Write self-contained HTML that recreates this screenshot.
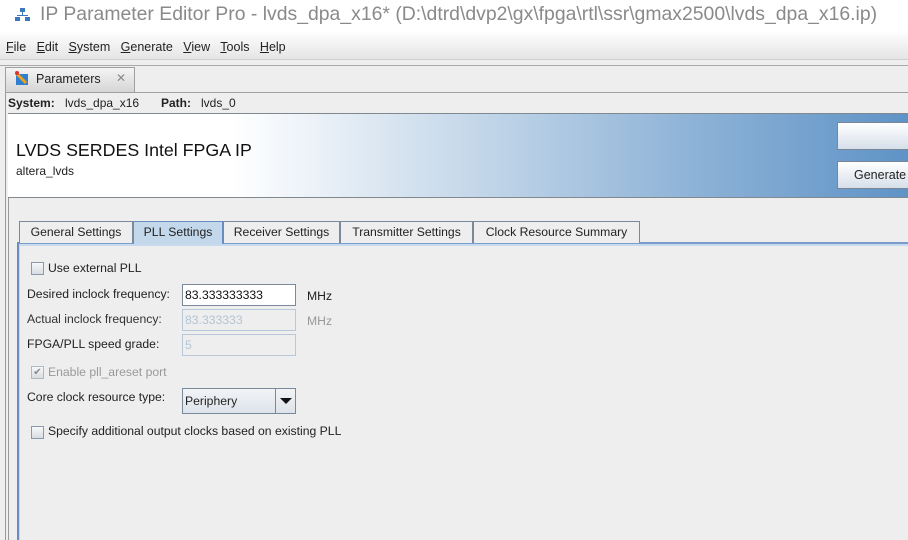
<!DOCTYPE html>
<html><head><style>
*{margin:0;padding:0;box-sizing:border-box}
body{width:908px;height:540px;overflow:hidden;background:#eeeeee;font-family:"Liberation Sans",Arial,sans-serif;font-size:12px;color:#222;position:relative}
.a{position:absolute;white-space:nowrap}
.tab{position:absolute;top:221px;height:22px;border:1px solid #7a8a9a;border-bottom:none;background:#eeeeee;font-size:12.2px;padding-top:3px;text-align:center;color:#222}
.cb{position:absolute;width:13px;height:13px;border:1px solid #8a9aaa;background:linear-gradient(#f6f8fa,#d8dde3)}
.lbl{position:absolute;font-size:12.2px;white-space:nowrap}
.fld{position:absolute;width:114px;height:22px;border:1px solid #b8c8d8;background:#eeeeee;font-size:12.2px;padding:3px 2px;color:#b4c4d4}
</style></head><body>
<div class="a" style="left:0;top:0;width:908px;height:30px;background:#fff"></div>
<svg class="a" style="left:15px;top:7px" width="16" height="16" viewBox="0 0 16 16"><rect x="5" y="1" width="5" height="4" fill="#3a78c0"/><rect x="7" y="5" width="1" height="4" fill="#3a78c0"/><rect x="2" y="8" width="11" height="1" fill="#3a78c0"/><rect x="0" y="10" width="5" height="4" fill="#3a78c0"/><rect x="10" y="10" width="5" height="4" fill="#3a78c0"/></svg>
<div class="a" style="left:40px;top:3px;font-size:19.4px;color:#8a8a8a">IP Parameter Editor Pro - lvds_dpa_x16* (D:\dtrd\dvp2\gx\fpga\rtl\ssr\gmax2500\lvds_dpa_x16.ip)</div>
<div class="a" style="left:0;top:30px;width:908px;height:30px;background:linear-gradient(#ffffff,#e4e4e4)"></div>
<div class="a" style="left:0;top:59px;width:908px;height:1px;background:#d0d0d0"></div>
<div class="a" style="left:0;top:60px;width:908px;height:6px;background:#eeeeee"></div>
<div class="a" style="left:0;top:65px;width:908px;height:1px;background:#a8a8a8"></div>
<div class="a" style="left:6px;top:40px;font-size:12.5px"><u>F</u>ile&nbsp;&nbsp; <u>E</u>dit&nbsp;&nbsp; <u>S</u>ystem&nbsp;&nbsp; <u>G</u>enerate&nbsp;&nbsp; <u>V</u>iew&nbsp;&nbsp; <u>T</u>ools&nbsp;&nbsp; <u>H</u>elp</div>
<div class="a" style="left:5px;top:67px;width:130px;height:26px;border:1px solid #a0a0a0;border-bottom:none;background:linear-gradient(#f4f4f4,#d4d4d4)"></div>
<svg class="a" style="left:14px;top:71px" width="16" height="16"><rect x="2" y="3" width="12" height="11" fill="#2f7fd0"/><path d="M2 2 L12 12" stroke="#f0a020" stroke-width="3"/><circle cx="3" cy="2" r="2" fill="#e03030"/></svg>
<div class="a" style="left:36px;top:72px;font-size:12.5px">Parameters</div>
<div class="a" style="left:116px;top:71px;font-size:12px;color:#888">✕</div>
<div class="a" style="left:5px;top:92px;width:903px;height:1px;background:#a0a0a0"></div>
<div class="a" style="left:8px;top:96px;font-size:12px"><b>System:</b></div>
<div class="a" style="left:65px;top:96px;font-size:12px">lvds_dpa_x16</div>
<div class="a" style="left:161px;top:96px;font-size:12px"><b>Path:</b></div>
<div class="a" style="left:201px;top:96px;font-size:12px">lvds_0</div>
<div class="a" style="left:8px;top:113px;width:900px;height:85px;border-top:1px solid #808890;border-bottom:1px solid #808890;background:linear-gradient(90deg,#ffffff 0%,#ffffff 25%,#c8daeb 50%,#90b4d8 75%,#5f93c6 100%)"></div>
<div class="a" style="left:16px;top:140px;font-size:17.8px;color:#111">LVDS SERDES Intel FPGA IP</div>
<div class="a" style="left:16px;top:164px;font-size:12px">altera_lvds</div>
<div class="a" style="left:837px;top:122px;width:80px;height:28px;border:1px solid #7a8696;background:linear-gradient(#ffffff,#d6dfea)"></div>
<div class="a" style="left:837px;top:161px;width:80px;height:28px;border:1px solid #7a8696;background:linear-gradient(#ffffff,#d6dfea);font-size:12.5px;padding:6px 0 0 16px">Generate</div>
<div class="a" style="left:5px;top:93px;width:1px;height:447px;background:#999"></div>
<div class="a" style="left:8px;top:198px;width:1px;height:342px;background:#999"></div>
<div class="a" style="left:18px;top:242px;width:890px;height:2px;background:#7a9ccc"></div>
<div class="a" style="left:18px;top:244px;width:890px;height:2px;background:#c8daee"></div>
<div class="a" style="left:17px;top:242px;width:2px;height:298px;background:#6a8cc0"></div>
<div class="a" style="left:19px;top:244px;width:1px;height:296px;background:#c8daee"></div>
<div class="tab" style="left:19px;width:114px">General Settings</div>
<div class="tab" style="left:133px;width:90px;top:221px;height:23px;background:#c4d8ec;border-color:#6a8cc0">PLL Settings</div>
<div class="tab" style="left:223px;width:117px">Receiver Settings</div>
<div class="tab" style="left:340px;width:133px">Transmitter Settings</div>
<div class="tab" style="left:473px;width:167px">Clock Resource Summary</div>
<div class="cb" style="left:31px;top:262px"></div>
<div class="lbl" style="left:48px;top:261px">Use external PLL</div>
<div class="lbl" style="left:27px;top:287px">Desired inclock frequency:</div>
<div class="fld" style="left:182px;top:284px;background:#fff;border-color:#7a8a9a;color:#111">83.333333333</div>
<div class="lbl" style="left:307px;top:289px">MHz</div>
<div class="lbl" style="left:27px;top:312px;color:#333">Actual inclock frequency:</div>
<div class="fld" style="left:182px;top:309px">83.333333</div>
<div class="lbl" style="left:307px;top:314px;color:#999">MHz</div>
<div class="lbl" style="left:27px;top:337px">FPGA/PLL speed grade:</div>
<div class="fld" style="left:182px;top:334px">5</div>
<div class="cb" style="left:31px;top:366px;border-color:#b0b8c0;font-size:10px;line-height:11px;color:#888;text-align:center">✔</div>
<div class="lbl" style="left:48px;top:365px;color:#999">Enable pll_areset port</div>
<div class="lbl" style="left:27px;top:390px">Core clock resource type:</div>
<div class="a" style="left:182px;top:388px;width:114px;height:26px;border:1px solid #7a8a9a;background:linear-gradient(#f2f4f6,#dde3ea)"></div>
<div class="a" style="left:275px;top:389px;width:1px;height:24px;background:#7a8a9a"></div>
<div class="lbl" style="left:185px;top:394px">Periphery</div>
<div class="a" style="left:280px;top:398px;width:0;height:0;border-left:6px solid transparent;border-right:6px solid transparent;border-top:6px solid #111"></div>
<div class="cb" style="left:31px;top:426px"></div>
<div class="lbl" style="left:48px;top:424px">Specify additional output clocks based on existing PLL</div>
</body></html>
